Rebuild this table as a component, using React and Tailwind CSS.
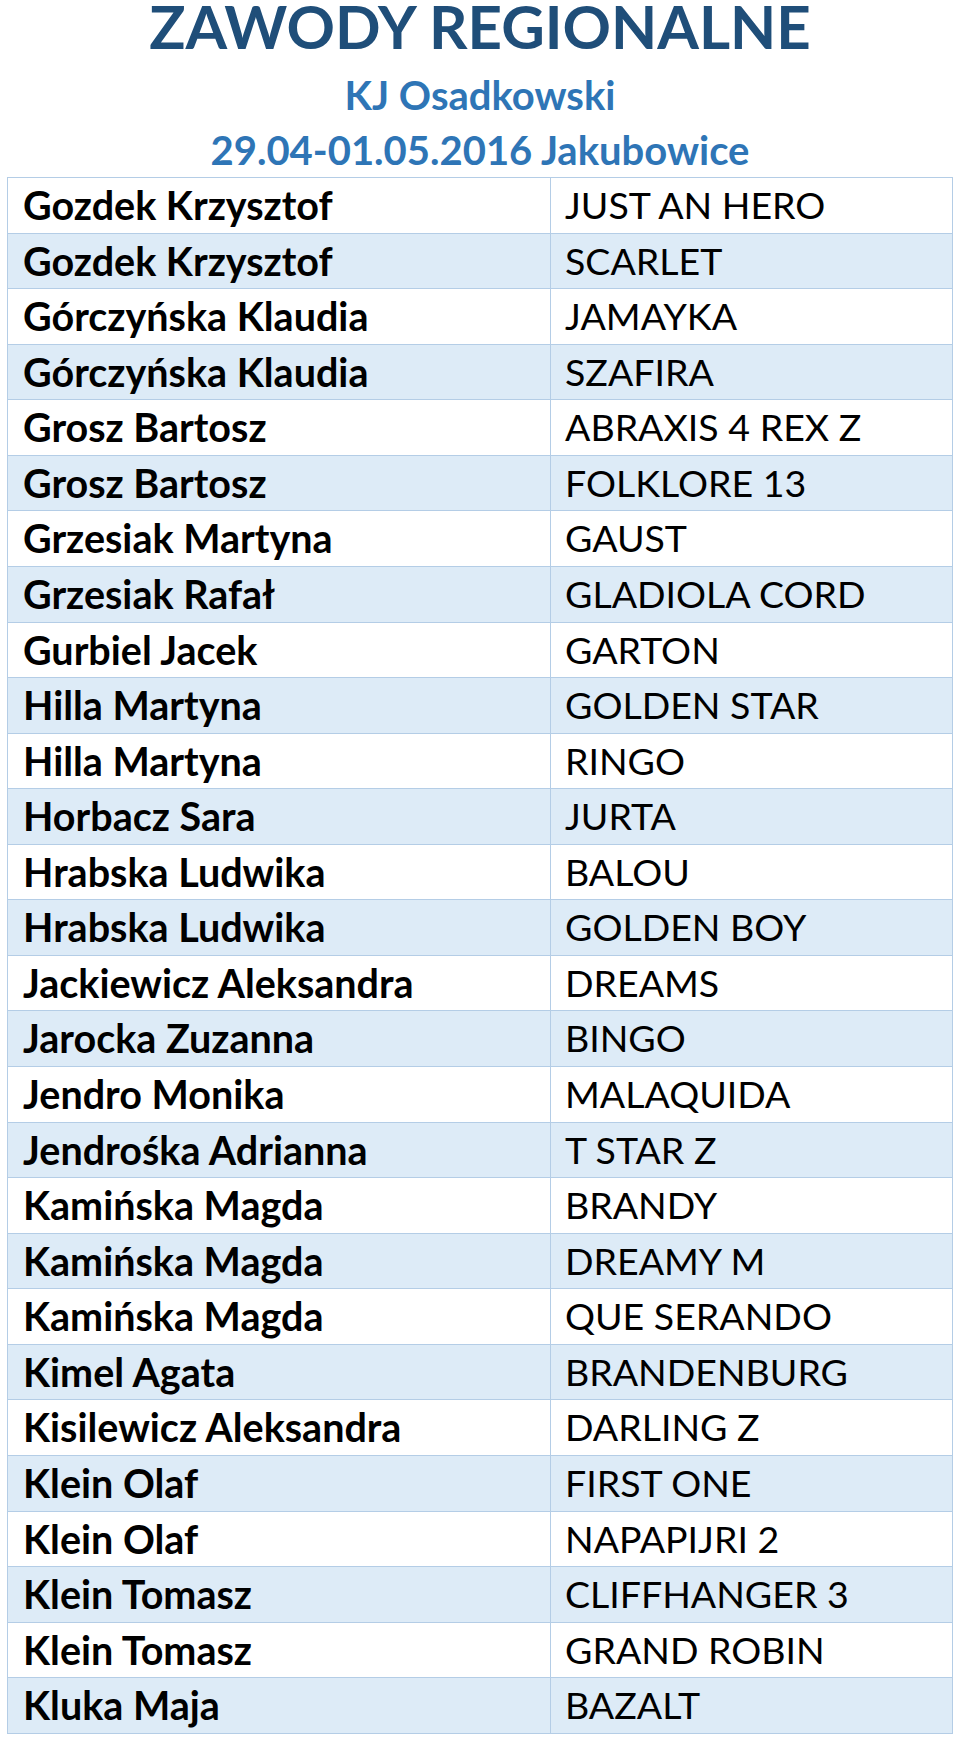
import React from "react";

const rows = [
  ["Gozdek Krzysztof", "JUST AN HERO"],
  ["Gozdek Krzysztof", "SCARLET"],
  ["Górczyńska Klaudia", "JAMAYKA"],
  ["Górczyńska Klaudia", "SZAFIRA"],
  ["Grosz Bartosz", "ABRAXIS 4 REX Z"],
  ["Grosz Bartosz", "FOLKLORE 13"],
  ["Grzesiak Martyna", "GAUST"],
  ["Grzesiak Rafał", "GLADIOLA CORD"],
  ["Gurbiel Jacek", "GARTON"],
  ["Hilla Martyna", "GOLDEN STAR"],
  ["Hilla Martyna", "RINGO"],
  ["Horbacz Sara", "JURTA"],
  ["Hrabska Ludwika", "BALOU"],
  ["Hrabska Ludwika", "GOLDEN BOY"],
  ["Jackiewicz Aleksandra", "DREAMS"],
  ["Jarocka Zuzanna", "BINGO"],
  ["Jendro Monika", "MALAQUIDA"],
  ["Jendrośka Adrianna", "T STAR Z"],
  ["Kamińska Magda", "BRANDY"],
  ["Kamińska Magda", "DREAMY M"],
  ["Kamińska Magda", "QUE SERANDO"],
  ["Kimel Agata", "BRANDENBURG"],
  ["Kisilewicz Aleksandra", "DARLING Z"],
  ["Klein Olaf", "FIRST ONE"],
  ["Klein Olaf", "NAPAPIJRI 2"],
  ["Klein Tomasz", "CLIFFHANGER 3"],
  ["Klein Tomasz", "GRAND ROBIN"],
  ["Kluka Maja", "BAZALT"],
];

export default function App() {
  return (
    <div className="min-h-screen w-[960px] bg-white font-['Lato','Liberation_Sans',sans-serif]">
      {/* header */}
      <div className="text-center">
        <h1 className="text-[60px] leading-[52px] font-bold text-[#1F4E79]">ZAWODY REGIONALNE</h1>
        <p className="mt-[23px] text-[40px] leading-[40px] font-bold text-[#2E75B6]">KJ Osadkowski</p>
        <p className="mt-[15px] text-[40px] leading-[40px] font-bold text-[#2E75B6]">29.04-01.05.2016 Jakubowice</p>
      </div>

      {/* list */}
      <div className="mt-[7px] mx-[7px] w-[946px] border-t border-l border-r border-[#B4CDE6]">
        {rows.map(([rider, horse], i) => (
          <div
            key={i}
            className={
              "grid grid-cols-[543px_1fr] h-[55.57px] border-b border-[#B4CDE6] leading-[54px] text-black " +
              (i % 2 === 1 ? "bg-[#DDEBF7]" : "bg-white")
            }
          >
            <div className="pl-[15px] text-[39.5px] font-bold border-r border-[#B4CDE6] whitespace-nowrap">{rider}</div>
            <div className="pl-[14px] text-[37.5px] whitespace-nowrap">{horse}</div>
          </div>
        ))}
      </div>
    </div>
  );
}
